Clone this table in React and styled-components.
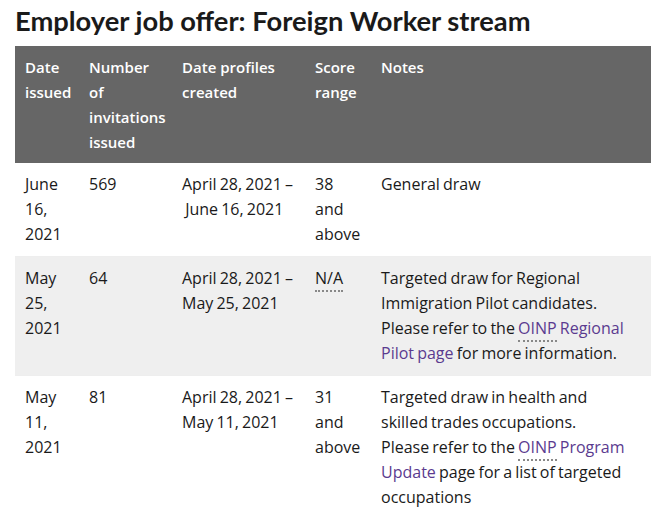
import React from 'react';
import styled, { createGlobalStyle } from 'styled-components';

const GlobalStyle = createGlobalStyle`
  body {
    margin: 0;
    background: #fff;
    font-family: "Open Sans", "Liberation Sans", sans-serif;
    color: #1a1a1a;
  }
`;

const Page = styled.div`
  padding: 6px 16px 0 15px;
`;

const Title = styled.h2`
  margin: 0 0 10px;
  font-family: Lato, "Open Sans", sans-serif;
  font-weight: 700;
  font-size: 27.3px;
  line-height: 30px;
  color: #1a1a1a;
`;

const Table = styled.table`
  width: 636px;
  border-collapse: collapse;
  table-layout: fixed;
  font-size: 16px;
  line-height: 25px;
  word-spacing: -1px;
`;

const Th = styled.th`
  width: ${(p) => p.w - 20}px;
  background: #666;
  color: #fff;
  font-weight: 600;
  font-size: 15px;
  word-spacing: 0;
  text-align: left;
  vertical-align: top;
  padding: 9px 10px 8px;
`;

const Row = styled.tr`
  background: ${(p) => (p.shaded ? '#efefef' : '#fff')};
  border-bottom: 1px solid #eee;
`;

const Td = styled.td`
  vertical-align: top;
  padding: 9px 10px;
`;

const NoteCell = styled(Td)`
  padding-right: 20px;
`;

const Abbr = styled.abbr`
  text-decoration: none;
  border-bottom: 2px dotted #888;
  padding-bottom: 1px;
`;

const Link = styled.a`
  color: #5b3b8f;
  text-decoration: none;
`;

const columns = [
  ['Date issued', 64],
  ['Number of invitations issued', 93],
  ['Date profiles created', 133],
  ['Score range', 66],
  ['Notes', 280],
];

export default function App() {
  return (
    <Page>
      <GlobalStyle />
      <Title>Employer job offer: Foreign Worker stream</Title>
      <Table>
        <thead>
          <tr>
            {columns.map(([label, w]) => (
              <Th key={label} w={w}>{label}</Th>
            ))}
          </tr>
        </thead>
        <tbody>
          <Row>
            <Td>June 16, 2021</Td>
            <Td>569</Td>
            <Td>April 28, 2021 –<br />&nbsp;June 16, 2021</Td>
            <Td>38 and above</Td>
            <NoteCell>General draw</NoteCell>
          </Row>
          <Row shaded>
            <Td>May 25, 2021</Td>
            <Td>64</Td>
            <Td>April 28, 2021 –<br />May 25, 2021</Td>
            <Td><Abbr title="Not applicable">N/A</Abbr></Td>
            <NoteCell>
              Targeted draw for Regional Immigration Pilot candidates.<br />
              Please refer to the{' '}
              <Link href="#"><Abbr title="Ontario Immigrant Nominee Program">OINP</Abbr> Regional Pilot page</Link>{' '}
              for more information.
            </NoteCell>
          </Row>
          <Row>
            <Td>May 11, 2021</Td>
            <Td>81</Td>
            <Td>April 28, 2021 –<br />May 11, 2021</Td>
            <Td>31 and above</Td>
            <NoteCell>
              Targeted draw in health and skilled trades occupations.<br />
              Please refer to the{' '}
              <Link href="#"><Abbr title="Ontario Immigrant Nominee Program">OINP</Abbr> Program Update</Link>{' '}
              page for a list of targeted occupations
            </NoteCell>
          </Row>
        </tbody>
      </Table>
    </Page>
  );
}
